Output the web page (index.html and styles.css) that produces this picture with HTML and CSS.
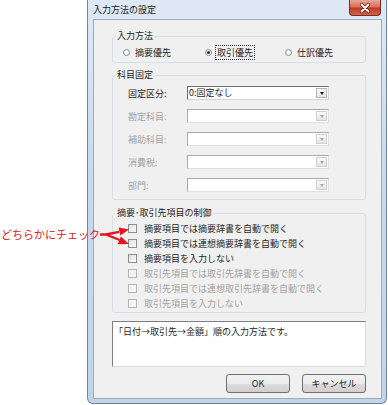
FILE: index.html
```html
<!DOCTYPE html>
<html>
<head>
    <title>入力方法の設定</title>
    <link rel="stylesheet" href="styles.css">
</head>
<body>
    <div class="window">
        <div class="titlebar">
            <span class="title">入力方法の設定</span>
            <span class="close">
                <svg width="30" height="14" viewBox="0 0 30 14">
                    <path d="M11.5 3.5 L18.5 10.5 M18.5 3.5 L11.5 10.5" stroke="#6b1c12" stroke-width="3.2" stroke-linecap="round"/>
                    <path d="M11.5 3.5 L18.5 10.5 M18.5 3.5 L11.5 10.5" stroke="#fff" stroke-width="1.8" stroke-linecap="round"/>
                </svg>
            </span>
        </div>
        <div class="client">
            <fieldset class="group">
                <legend>入力方法</legend>
                <div class="radios">
                    <label class="radio radio-1"><span class="dot"></span>摘要優先</label>
                    <label class="radio radio-2"><span class="dot checked"></span><span class="focus">取引優先</span></label>
                    <label class="radio"><span class="dot"></span>仕訳優先</label>
                </div>
            </fieldset>

            <fieldset class="group group-fixed">
                <legend>科目固定</legend>
                <div class="fields">
                    <div class="field">
                        <span class="field-label">固定区分:</span>
                        <div class="combo"><span class="combo-value">0:固定なし</span><span class="combo-btn"></span></div>
                    </div>
                    <div class="field disabled">
                        <span class="field-label">勘定科目:</span>
                        <div class="combo"><span class="combo-value"></span><span class="combo-btn"></span></div>
                    </div>
                    <div class="field disabled">
                        <span class="field-label">補助科目:</span>
                        <div class="combo"><span class="combo-value"></span><span class="combo-btn"></span></div>
                    </div>
                    <div class="field disabled">
                        <span class="field-label">消費税:</span>
                        <div class="combo"><span class="combo-value"></span><span class="combo-btn"></span></div>
                    </div>
                    <div class="field disabled">
                        <span class="field-label">部門:</span>
                        <div class="combo"><span class="combo-value"></span><span class="combo-btn"></span></div>
                    </div>
                </div>
            </fieldset>

            <fieldset class="group group-checks">
                <legend>摘要･取引先項目の制御</legend>
                <div class="checks">
                    <label class="check"><span class="box"></span>摘要項目では摘要辞書を自動で開く</label>
                    <label class="check"><span class="box"></span>摘要項目では連想摘要辞書を自動で開く</label>
                    <label class="check"><span class="box"></span>摘要項目を入力しない</label>
                    <label class="check disabled"><span class="box"></span>取引先項目では取引先辞書を自動で開く</label>
                    <label class="check disabled"><span class="box"></span>取引先項目では連想取引先辞書を自動で開く</label>
                    <label class="check disabled"><span class="box"></span>取引先項目を入力しない</label>
                </div>
            </fieldset>

            <div class="memo">「日付→取引先→金額」順の入力方法です。</div>

            <div class="buttons">
                <button type="button">OK</button>
                <button type="button">キャンセル</button>
            </div>
        </div>
    </div>

    <div class="note">
        <span class="note-text">どちらかにチェック</span>
        <svg class="note-arrows" width="140" height="40" viewBox="0 0 140 40">
            <path d="M100 19.5 H106 L119 16.8 M106 19.5 L119.5 25" stroke="#e3161d" stroke-width="2.4" fill="none"/>
            <polygon points="129,14.5 120.3,20.4 118.6,12.4" fill="#e3161d"/>
            <polygon points="129,29 117.6,29.2 120.9,21.6" fill="#e3161d"/>
        </svg>
    </div>
</body>
</html>
```

FILE: styles.css
```css
body {
    margin: 0;
    width: 388px;
    height: 405px;
    overflow: hidden;
    position: relative;
    background-color: #fff;
    font-family: "Noto Sans CJK JP", sans-serif;
    font-size: 9px;
    color: #1e1e1e;
}

/* window frame */
.window {
    margin-left: 87px;
    width: 300px;
    height: 404px;
    box-sizing: border-box;
    border: 1px solid #6e84a0;
    border-top: none;
    border-radius: 0 0 6px 6px;
    background: linear-gradient(#dfe9f5, #c9daee 40%, #c2d4ea);
    padding: 0 4px 4px 5px;
    display: flex;
    flex-direction: column;
}
.titlebar {
    height: 19px;
    display: flex;
    align-items: flex-start;
}
.title {
    line-height: 20px;
    color: #1b1b1b;
}
.close {
    margin-left: auto;
    margin-right: 1px;
    width: 32px;
    height: 16px;
    box-sizing: border-box;
    border: 1px solid #7a2c22;
    border-top: none;
    border-radius: 0 0 4px 4px;
    background: linear-gradient(#e9a696, #d8705b 45%, #c23a24 55%, #d2634a);
    display: flex;
    align-items: center;
    justify-content: center;
}
.client {
    flex: 1;
    border: 1px solid #97abc3;
    background-color: #f0f0f0;
    padding: 0 15px 0 18px;
}

/* group boxes */
.group {
    margin: 10px 0 0;
    padding: 0;
    border: 1px solid #d5dfe5;
    border-radius: 3px;
    min-inline-size: 0;
}
.group legend {
    margin-left: 3px;
    padding: 0 1px;
    line-height: 12px;
}
.group-fixed {
    margin-top: 6px;
}
.group-checks {
    margin-top: 7px;
}

/* radios */
.radios {
    display: flex;
    padding: 4px 0 3px 10px;
}
.radio {
    display: flex;
    align-items: center;
    gap: 5px;
    height: 13px;
}
.radio-1 {
    width: 82px;
}
.radio-2 {
    width: 80px;
}
.dot {
    width: 7px;
    height: 7px;
    box-sizing: border-box;
    border: 1px solid #8c8c8c;
    border-radius: 50%;
    background: radial-gradient(circle, #fff 40%, #dedede);
    display: flex;
    align-items: center;
    justify-content: center;
}
.dot.checked::after {
    content: "";
    width: 3px;
    height: 3px;
    border-radius: 50%;
    background-color: #2b2b2b;
}
.focus {
    outline: 1px dotted #333;
    padding: 0 1px;
    margin-left: -1px;
}

/* combo fields */
.fields {
    display: flex;
    flex-direction: column;
    gap: 9px;
    padding: 5px 0 7px 15px;
}
.field {
    display: flex;
    align-items: center;
    height: 14px;
}
.field-label {
    width: 59px;
}
.combo {
    width: 142px;
    height: 14px;
    box-sizing: border-box;
    border: 1px solid;
    border-color: #6e6e6e #d6d6d6 #d6d6d6 #6e6e6e;
    background-color: #fff;
    display: flex;
    align-items: center;
    padding: 0 1px 0 1px;
}
.combo-value {
    flex: 1;
    line-height: 12px;
}
.combo-btn {
    width: 11px;
    height: 10px;
    box-sizing: border-box;
    border: 1px solid #b5b5b5;
    background: linear-gradient(#fafafa, #e4e4e4);
    display: flex;
    align-items: center;
    justify-content: center;
}
.combo-btn::after {
    content: "";
    border-left: 2.5px solid transparent;
    border-right: 2.5px solid transparent;
    border-top: 3px solid #111;
}
.field.disabled .field-label {
    color: #a3a3a3;
}
.field.disabled .combo {
    border-color: #a9a9a9 #e0e0e0 #e0e0e0 #a9a9a9;
}
.field.disabled .combo-btn {
    border-color: #d0d0d0;
}
.field.disabled .combo-btn::after {
    border-top-color: #a8a8a8;
}

/* check boxes */
.checks {
    display: flex;
    flex-direction: column;
    padding: 2px 0 1px 15px;
}
.check {
    display: flex;
    align-items: center;
    gap: 7px;
    height: 15px;
}
.box {
    width: 9px;
    height: 9px;
    box-sizing: border-box;
    border: 1px solid #8e8f8f;
    background: linear-gradient(135deg, #dcdcdc, #fdfdfd);
}
.check.disabled {
    color: #a3a3a3;
}
.check.disabled .box {
    border-color: #b4b4b4;
    background: #f4f4f4;
}

/* memo */
.memo {
    margin-top: 8px;
    height: 46px;
    box-sizing: border-box;
    border: 1px solid;
    border-color: #7f7f7f #dadada #dadada #7f7f7f;
    background-color: #fff;
    padding: 4px 0 0 1px;
    line-height: 12px;
}

/* buttons */
.buttons {
    display: flex;
    justify-content: flex-end;
    gap: 12px;
    margin-top: 7px;
}
button {
    width: 64px;
    height: 19px;
    padding: 0;
    border: 1px solid #707070;
    border-radius: 3px;
    background: linear-gradient(#f2f2f2, #ebebeb 50%, #dddddd 50%, #cfcfcf);
    font-family: "Noto Sans CJK JP", sans-serif;
    font-size: 9px;
    color: #1e1e1e;
}

/* red annotation */
.note {
    position: absolute;
    left: 0;
    top: 215px;
    width: 140px;
    height: 40px;
    z-index: 1;
}
.note-text {
    position: absolute;
    left: 1px;
    top: 12px;
    font-size: 11px;
    line-height: 15px;
    color: #e3161d;
}
.note-arrows {
    position: absolute;
    left: 0;
    top: 0;
}
```
